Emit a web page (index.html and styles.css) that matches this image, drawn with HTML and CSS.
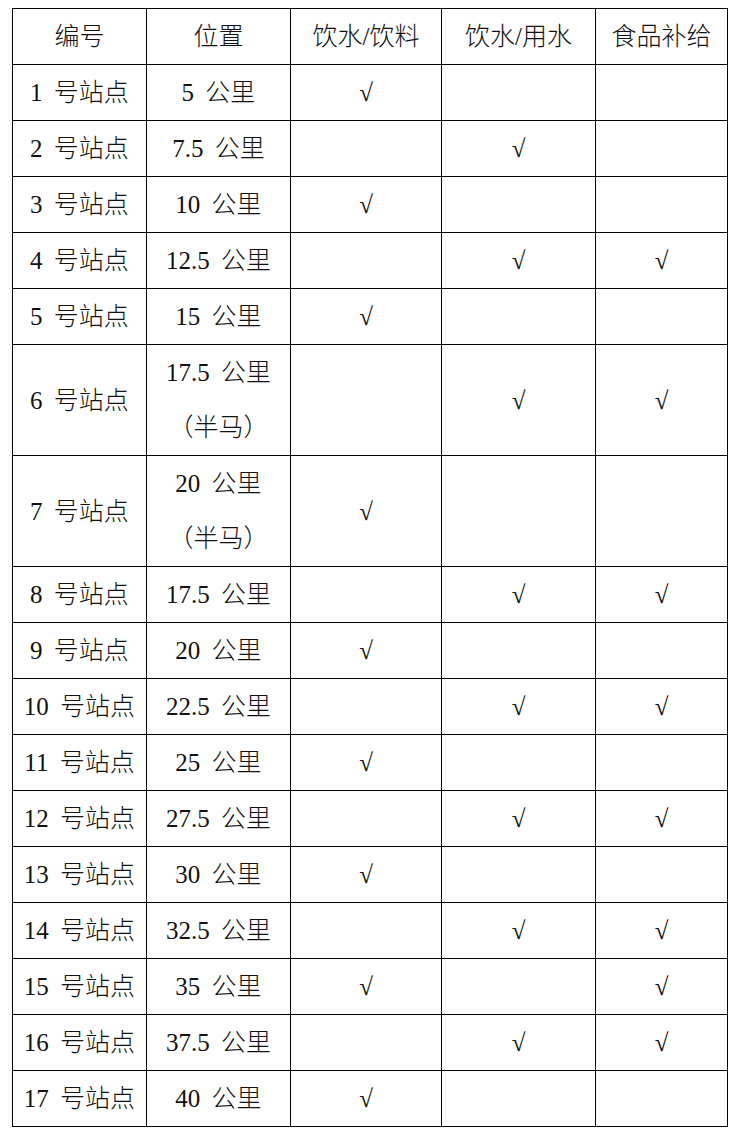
FILE: index.html
```html
<!DOCTYPE html>
<html lang="zh-CN">
<head>
<meta charset="utf-8">
<title>补给站点</title>
<link rel="stylesheet" href="styles.css">
</head>
<body>
<table class="supply">
  <colgroup>
    <col class="c1"><col class="c2"><col class="c3"><col class="c4"><col class="c5">
  </colgroup>
  <tr><td>编号</td><td>位置</td><td>饮水/饮料</td><td>饮水/用水</td><td>食品补给</td></tr>
  <tr><td>1 号站点</td><td>5 公里</td><td>√</td><td></td><td></td></tr>
  <tr><td>2 号站点</td><td>7.5 公里</td><td></td><td>√</td><td></td></tr>
  <tr><td>3 号站点</td><td>10 公里</td><td>√</td><td></td><td></td></tr>
  <tr><td>4 号站点</td><td>12.5 公里</td><td></td><td>√</td><td>√</td></tr>
  <tr><td>5 号站点</td><td>15 公里</td><td>√</td><td></td><td></td></tr>
  <tr class="tall"><td>6 号站点</td><td>17.5 公里<br>（半马）</td><td></td><td>√</td><td>√</td></tr>
  <tr class="tall"><td>7 号站点</td><td>20 公里<br>（半马）</td><td>√</td><td></td><td></td></tr>
  <tr><td>8 号站点</td><td>17.5 公里</td><td></td><td>√</td><td>√</td></tr>
  <tr><td>9 号站点</td><td>20 公里</td><td>√</td><td></td><td></td></tr>
  <tr><td>10 号站点</td><td>22.5 公里</td><td></td><td>√</td><td>√</td></tr>
  <tr><td>11 号站点</td><td>25 公里</td><td>√</td><td></td><td></td></tr>
  <tr><td>12 号站点</td><td>27.5 公里</td><td></td><td>√</td><td>√</td></tr>
  <tr><td>13 号站点</td><td>30 公里</td><td>√</td><td></td><td></td></tr>
  <tr><td>14 号站点</td><td>32.5 公里</td><td></td><td>√</td><td>√</td></tr>
  <tr><td>15 号站点</td><td>35 公里</td><td>√</td><td></td><td>√</td></tr>
  <tr><td>16 号站点</td><td>37.5 公里</td><td></td><td>√</td><td>√</td></tr>
  <tr><td>17 号站点</td><td>40 公里</td><td>√</td><td></td><td></td></tr>
</table>
</body>
</html>
```
FILE: styles.css
```css
html, body {
  margin: 0;
  padding: 0;
  background: #ffffff;
}
body {
  padding: 8px 0 0 12px;
}
.supply {
  border-collapse: collapse;
  table-layout: fixed;
  width: 715px;
  font-family: "Liberation Serif", "Noto Sans CJK SC", serif;
  font-size: 25px;
  font-weight: 300;
  color: #111;
  word-spacing: 5px;
}
.c1 { width: 134px; }
.c2 { width: 144px; }
.c3 { width: 151px; }
.c4 { width: 154px; }
.c5 { width: 132px; }
.supply td {
  border: 1px solid #000;
  padding: 0;
  line-height: 55px;
  height: 55px;
  text-align: center;
  vertical-align: middle;
  white-space: nowrap;
}
```
